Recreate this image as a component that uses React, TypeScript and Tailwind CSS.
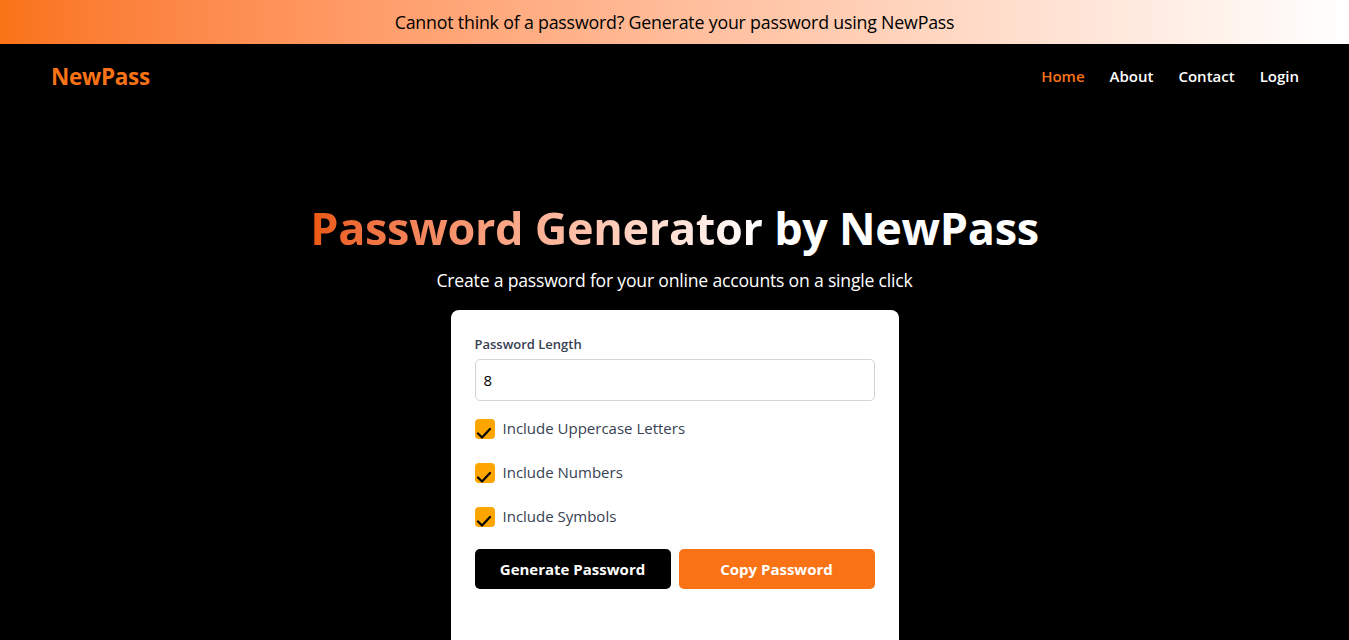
import React from "react";

function Check({ label }: { label: string }) {
  return (
    <label className="flex items-center gap-2 h-[20px]">
      <span className="w-[20px] h-[20px] rounded-[4px] bg-[#ffa500] flex items-end justify-start">
        <svg width="20" height="20" viewBox="0 0 20 20">
          <path d="M3 14.5 L7 18.5 L15 10" fill="none" stroke="#000" strokeWidth="2.2" strokeLinecap="round" strokeLinejoin="round" />
        </svg>
      </span>
      <span className="text-[15px] text-[#374151] leading-none">{label}</span>
    </label>
  );
}

export default function App() {
  return (
    <div className="min-h-screen bg-black" style={{ fontFamily: '"Open Sans", "Noto Sans", sans-serif' }}>
      <div className="h-[44px] bg-gradient-to-r from-[#f97316] to-white flex items-center justify-center">
        <p className="text-[17.8px] text-black tracking-[-0.2px]">Cannot think of a password? Generate your password using NewPass</p>
      </div>
      <nav className="h-[66px] flex items-center justify-between pl-[51px] pr-[50px]">
        <div className="text-[22.5px] font-bold text-[#f97316] tracking-[-0.3px] pb-[1px]">NewPass</div>
        <ul className="flex gap-[25px] text-[15px] font-semibold text-white pb-[2px]">
          <li className="text-[#f97316]">Home</li>
          <li>About</li>
          <li>Contact</li>
          <li>Login</li>
        </ul>
      </nav>
      <main className="flex flex-col items-center pt-[90px]">
        <h1 className="text-[45px] font-bold leading-[56px] tracking-[-0.3px] text-white">
          <span className="bg-gradient-to-r from-[#ea580c] to-white bg-clip-text text-transparent">Password Generator</span>{" "}
          by NewPass
        </h1>
        <p className="text-[17.6px] text-white mt-[11px] tracking-[-0.2px]">Create a password for your online accounts on a single click</p>
        <div className="w-[448px] bg-white rounded-[8px] mt-[17px] px-[24px] pt-[25px] pb-[60px]">
          <label className="block text-[13px] font-semibold text-[#374151] mb-[4px]">Password Length</label>
          <div className="h-[42px] border border-[#d1d5db] rounded-[5px] flex items-center px-[8px] text-[15px] text-black">8</div>
          <div className="flex flex-col gap-[24px] mt-[18px]">
            <Check label="Include Uppercase Letters" />
            <Check label="Include Numbers" />
            <Check label="Include Symbols" />
          </div>
          <div className="flex gap-[8px] mt-[22px]">
            <button className="flex-1 h-[40px] bg-black text-white rounded-[5px] text-[15px] font-bold">Generate Password</button>
            <button className="flex-1 h-[40px] bg-[#f97316] text-white rounded-[5px] text-[15px] font-bold">Copy Password</button>
          </div>
          <div className="h-[40px]"></div>
        </div>
      </main>
    </div>
  );
}
